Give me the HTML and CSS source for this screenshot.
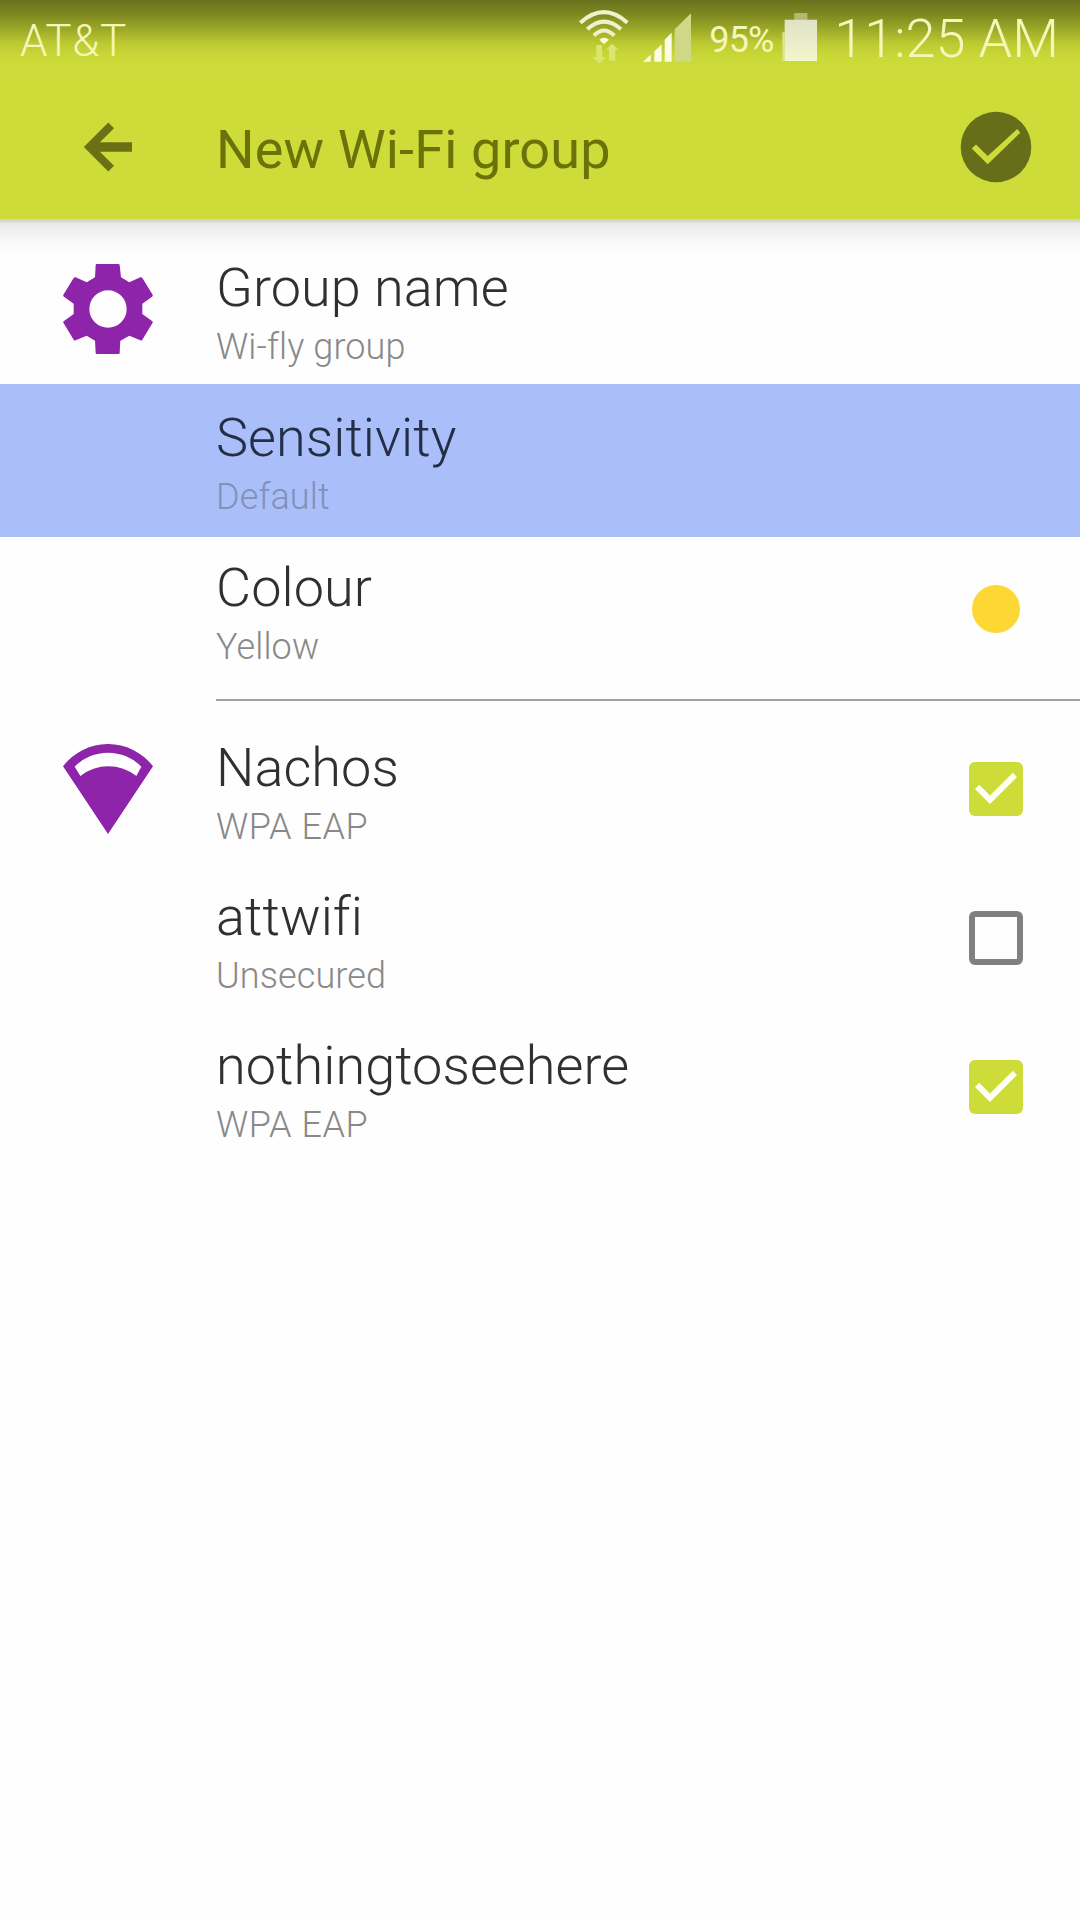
FILE: index.html
```html
<!DOCTYPE html>
<html lang="en">
<head>
<meta charset="utf-8">
<title>New Wi-Fi group</title>
<link rel="stylesheet" href="styles.css">
</head>
<body>
<header class="header">
  <div class="status">
    <span class="carrier">AT&amp;T</span>
    <div class="indicators">
      <svg class="wifi-status" viewBox="57 31 150 162" aria-hidden="true">
        <g fill="none" stroke="#eff1c8" stroke-width="12">
          <path d="M61 69Q132 6 202 69"/>
          <path d="M82 89Q132 43 183 89"/>
          <path d="M102 108Q132 77 163 108"/>
        </g>
        <path fill="#f8fadb" d="M118 120Q132 108 147 120L132 134Z"/>
        <path fill="#dbe56f" d="M109 136H126V172H137L118 192 98 172H109ZM147 183V150H138L157 132 176 150H166V183Z"/>
      </svg>
      <svg class="signal" viewBox="250 40 144 146" aria-hidden="true">
        <path fill="#cfd885" d="M345 88L394 40V186H345Z"/>
        <path fill="#fbfce4" d="M250 186L273 165V186ZM284 155L306 133V186H284ZM315 120L336 99V186H315Z"/>
      </svg>
      <span class="percent">95%</span>
      <svg class="battery" viewBox="665 38 106 145" aria-hidden="true">
        <defs>
          <linearGradient id="charge" x2="0" y2="1">
            <stop offset="0" stop-color="#dfe2c6"/>
            <stop offset="1" stop-color="#f3f7cb"/>
          </linearGradient>
        </defs>
        <path fill="#b4b96f" d="M702 38H742V59H702Z"/>
        <path fill="#dce58c" d="M666 96H673V183H666Z"/>
        <path fill="url(#charge)" d="M673 58H771V183H673Z"/>
      </svg>
      <span class="clock">11:25 AM</span>
    </div>
  </div>
  <div class="toolbar">
    <svg class="back" viewBox="0 0 24 24" role="img" aria-label="Back">
      <path d="M20 10.45H9.3L14 5.75 12.1 3.85 3.95 12l8.15 8.15L14 18.25 9.3 13.55H20z"/>
    </svg>
    <h1 class="title">New Wi-Fi group</h1>
    <svg class="confirm" viewBox="960 111 72 72" role="img" aria-label="Save">
      <circle cx="996" cy="147" r="35.3" fill="#666e1a"/>
      <path fill="#cddc39" d="M971.7 148.5L976 144.5 987.7 156 1017.3 129 1020.3 132.7 987.7 164.3Z"/>
    </svg>
  </div>
</header>
<main class="settings">
  <section class="group">
    <div class="row">
      <div class="lead">
        <svg class="lead-icon" viewBox="69 72 270 270" aria-hidden="true">
          <path fill-rule="evenodd" d="M171 72H235Q239 72 239 76L243 112 268 127 301 112Q305 111 307 114L337 163Q340 167 336 170L307 191V222L336 243Q340 246 337 250L307 299Q305 303 301 301L268 287 241 302 239 338Q239 342 235 342H171Q167 342 167 338L165 302 140 287 107 301Q103 303 101 299L71 250Q68 246 72 243L101 222V191L72 170Q68 167 71 163L101 114Q103 111 107 112L140 127 165 112 167 76Q167 72 171 72ZM204 151A56 56 0 1 0 204 263 56 56 0 1 0 204 151Z"/>
        </svg>
      </div>
      <div class="text"><span class="name">Group name</span><span class="detail">Wi-fly group</span></div>
    </div>
    <div class="row selected">
      <div class="lead"></div>
      <div class="text"><span class="name">Sensitivity</span><span class="detail">Default</span></div>
    </div>
    <div class="row colour">
      <div class="lead"></div>
      <div class="text"><span class="name">Colour</span><span class="detail">Yellow</span></div>
      <span class="swatch"></span>
    </div>
  </section>
  <section class="networks">
    <div class="row">
      <div class="lead">
        <svg class="lead-icon" viewBox="69 72 270 270" aria-hidden="true">
          <path fill-rule="evenodd" d="M69 139A169.5 169.5 0 0 1 339 139L204 342ZM104 140L121 168A136 136 0 0 1 289 168L304 140A140 140 0 0 0 104 140Z"/>
        </svg>
      </div>
      <div class="text"><span class="name">Nachos</span><span class="detail caps">WPA EAP</span></div>
      <span class="checkbox checked"><svg viewBox="3 3 18 18"><path d="M10 17l-5-5 1.41-1.41L10 14.17l7.59-7.59L19 8z"/></svg></span>
    </div>
    <div class="row">
      <div class="lead"></div>
      <div class="text"><span class="name">attwifi</span><span class="detail">Unsecured</span></div>
      <span class="checkbox"></span>
    </div>
    <div class="row">
      <div class="lead"></div>
      <div class="text"><span class="name">nothingtoseehere</span><span class="detail caps">WPA EAP</span></div>
      <span class="checkbox checked"><svg viewBox="3 3 18 18"><path d="M10 17l-5-5 1.41-1.41L10 14.17l7.59-7.59L19 8z"/></svg></span>
    </div>
  </section>
</main>
</body>
</html>
```
FILE: styles.css
```css
* {
  box-sizing: border-box;
}

body {
  margin: 0;
  min-height: 1920px;
  background: #fefefe;
  color: #303030;
  font-family: Roboto, sans-serif;
  font-weight: 300;
  font-variant-ligatures: none;
}

svg {
  display: block;
  flex: none;
}

.header {
  height: 219px;
  background: linear-gradient(#69731f 0, #7b8620 13px, #9ba828 29px, #bcc932 43px, #cad938 57px, #cddc39 70px);
}

.status {
  display: flex;
  justify-content: space-between;
  height: 75px;
  padding: 0 21px 0 20px;
  color: #f4f7b8;
}

.carrier {
  padding-top: 15px;
  font-size: 44px;
  line-height: 52px;
  letter-spacing: 0.6px;
}

.indicators {
  display: flex;
  align-items: flex-start;
}

.wifi-status {
  width: 50px;
  height: 54px;
  margin: 10px 14px 0 0;
}

.signal {
  width: 48px;
  height: 49px;
  margin: 13px 18px 0 0;
}

.percent {
  width: 73px;
  padding-top: 19px;
  font-size: 36px;
  font-weight: 400;
  line-height: 42px;
  letter-spacing: -0.8px;
}

.battery {
  width: 35px;
  height: 48px;
  margin-top: 13px;
}

.clock {
  padding-top: 7px;
  margin-left: 17px;
  font-size: 54px;
  line-height: 64px;
  white-space: nowrap;
}

.toolbar {
  display: grid;
  grid-template-columns: 216px 1fr 168px;
  align-items: center;
  height: 144px;
}

.back {
  width: 72px;
  height: 72px;
  justify-self: center;
  fill: #6a7013;
}

.title {
  margin: 6px 0 0;
  color: #6a7209;
  font-size: 54px;
  font-weight: 400;
  line-height: 64px;
  letter-spacing: 0.15px;
}

.confirm {
  width: 72px;
  height: 72px;
  justify-self: center;
}

.settings {
  padding-top: 15px;
  background: linear-gradient(#d3d3c4 0, #dadad0 3px, #e9e9e9 4px, #f0f0f0 12px, #fafafa 25px, #fefefe 37px) top / 100% 40px no-repeat;
}

.row {
  display: grid;
  grid-template-columns: 216px 1fr 168px;
  align-items: start;
  height: 150px;
}

.lead-icon {
  width: 90px;
  height: 90px;
  margin: 30px auto 0;
  fill: #8e24aa;
}

.text {
  display: flex;
  flex-direction: column;
  gap: 7px;
  padding-top: 22px;
}

.name {
  font-size: 54px;
  line-height: 63px;
  letter-spacing: 0.06px;
}

.detail {
  color: #898989;
  font-size: 36px;
  line-height: 42px;
  letter-spacing: 0.1px;
}

.caps {
  letter-spacing: 0.55px;
}

.selected {
  height: 153px;
  background: #aabffa;
  color: #242e46;
}

.selected .detail {
  color: #8290b8;
}

.colour {
  height: 162px;
}

.colour .text {
  padding-top: 19px;
}

.swatch {
  width: 48px;
  height: 48px;
  margin-top: 48px;
  justify-self: center;
  border-radius: 50%;
  background: #fdd835;
}

.networks::before {
  content: "";
  display: block;
  height: 2px;
  margin: 0 0 13px 216px;
  background: #a0a0a0;
}

.networks .row {
  height: 149px;
}

.checkbox {
  width: 54px;
  height: 54px;
  margin-top: 48px;
  justify-self: center;
  border: 6px solid #808080;
  border-radius: 6px;
}

.checked {
  border: 0;
  background: #cddc39;
}

.checked svg {
  width: 54px;
  height: 54px;
  fill: #fffff4;
}
```
